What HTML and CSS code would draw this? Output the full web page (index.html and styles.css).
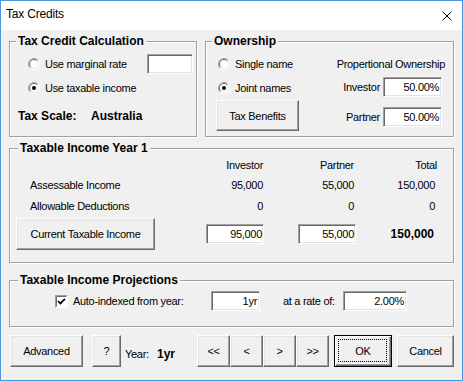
FILE: index.html
```html
<!DOCTYPE html>
<html>
<head>
<meta charset="utf-8">
<link rel="stylesheet" href="styles.css">
</head>
<body>
<div class="window">
  <div class="titlebar">
    <span class="title">Tax Credits</span>
    <svg class="close" viewBox="0 0 10 10" width="10" height="10"><path d="M0.5 0.5 L9.5 9.5 M9.5 0.5 L0.5 9.5" stroke="#000" stroke-width="1" fill="none"/></svg>
  </div>
  <div class="client">
    <div class="row1">
      <fieldset class="group g-calc">
        <legend>Tax Credit Calculation</legend>
        <div class="opt-row first">
          <svg class="radio" viewBox="0 0 12 12" width="12" height="12"><circle cx="6" cy="6" r="5.5" fill="#fff"/><path d="M2.1 9.9 A5.5 5.5 0 0 1 9.9 2.1" stroke="#a0a0a0" fill="none"/><path d="M9.9 2.1 A5.5 5.5 0 0 1 2.1 9.9" stroke="#fff" fill="none"/><path d="M2.8 9.2 A4.5 4.5 0 0 1 9.2 2.8" stroke="#696969" fill="none"/><path d="M9.2 2.8 A4.5 4.5 0 0 1 2.8 9.2" stroke="#e3e3e3" fill="none"/></svg>
          <span>Use marginal rate</span>
          <div class="field f-marg"></div>
        </div>
        <div class="opt-row">
          <svg class="radio" viewBox="0 0 12 12" width="12" height="12"><circle cx="6" cy="6" r="5.5" fill="#fff"/><path d="M2.1 9.9 A5.5 5.5 0 0 1 9.9 2.1" stroke="#a0a0a0" fill="none"/><path d="M9.9 2.1 A5.5 5.5 0 0 1 2.1 9.9" stroke="#fff" fill="none"/><path d="M2.8 9.2 A4.5 4.5 0 0 1 9.2 2.8" stroke="#696969" fill="none"/><path d="M9.2 2.8 A4.5 4.5 0 0 1 2.8 9.2" stroke="#e3e3e3" fill="none"/><circle cx="6" cy="6" r="2" fill="#000"/></svg>
          <span>Use taxable income</span>
        </div>
        <div class="scale-row">
          <b class="scale-lbl">Tax Scale:</b><b>Australia</b>
        </div>
      </fieldset>
      <fieldset class="group g-own">
        <legend>Ownership</legend>
        <div class="own-body">
          <div class="own-left">
            <div class="opt-row first">
              <svg class="radio" viewBox="0 0 12 12" width="12" height="12"><circle cx="6" cy="6" r="5.5" fill="#fff"/><path d="M2.1 9.9 A5.5 5.5 0 0 1 9.9 2.1" stroke="#a0a0a0" fill="none"/><path d="M9.9 2.1 A5.5 5.5 0 0 1 2.1 9.9" stroke="#fff" fill="none"/><path d="M2.8 9.2 A4.5 4.5 0 0 1 9.2 2.8" stroke="#696969" fill="none"/><path d="M9.2 2.8 A4.5 4.5 0 0 1 2.8 9.2" stroke="#e3e3e3" fill="none"/></svg>
              <span>Single name</span>
            </div>
            <div class="opt-row">
              <svg class="radio" viewBox="0 0 12 12" width="12" height="12"><circle cx="6" cy="6" r="5.5" fill="#fff"/><path d="M2.1 9.9 A5.5 5.5 0 0 1 9.9 2.1" stroke="#a0a0a0" fill="none"/><path d="M9.9 2.1 A5.5 5.5 0 0 1 2.1 9.9" stroke="#fff" fill="none"/><path d="M2.8 9.2 A4.5 4.5 0 0 1 9.2 2.8" stroke="#696969" fill="none"/><path d="M9.2 2.8 A4.5 4.5 0 0 1 2.8 9.2" stroke="#e3e3e3" fill="none"/><circle cx="6" cy="6" r="2" fill="#000"/></svg>
              <span>Joint names</span>
            </div>
            <button class="btn btn-taxben">Tax Benefits</button>
          </div>
          <div class="own-right">
            <div class="prop-row">Propertional Ownership</div>
            <div class="pct-row"><span>Investor</span><div class="field pct">50.00%</div></div>
            <div class="pct-row second"><span>Partner</span><div class="field pct">50.00%</div></div>
          </div>
        </div>
      </fieldset>
    </div>

    <fieldset class="group g-inc">
      <legend>Taxable Income Year 1</legend>
      <div class="inc-grid">
        <div></div><div class="num hdr c2">Investor</div><div></div><div class="num hdr c4">Partner</div><div class="num hdr c5">Total</div>
        <div class="lbl">Assessable Income</div><div class="num c2">95,000</div><div></div><div class="num c4">55,000</div><div class="num c5v">150,000</div>
        <div class="lbl">Allowable Deductions</div><div class="num c2">0</div><div></div><div class="num c4">0</div><div class="num c5v">0</div>
        <div class="btn-cell"><button class="btn btn-cti">Current Taxable Income</button></div><div class="field inc-in">95,000</div><div></div><div class="field inc-in">55,000</div><div class="num c5b">150,000</div>
      </div>
    </fieldset>

    <fieldset class="group g-proj">
      <legend>Taxable Income Projections</legend>
      <div class="proj-row">
        <svg class="chk" viewBox="0 0 13 13" width="13" height="13"><rect x="0.5" y="0.5" width="12" height="12" fill="#fff" stroke="#a0a0a0"/><path d="M1.5 11.5 V1.5 H11.5" stroke="#696969" fill="none"/><path d="M12.5 0.5 V12.5 H0.5" stroke="#fff" fill="none"/><path d="M3 6 L5.3 8.5 L10 3.8" stroke="#000" stroke-width="1.8" fill="none"/></svg>
        <span class="chk-lbl">Auto-indexed from year:</span>
        <div class="field f-year">1yr</div>
        <span class="rate-lbl">at a rate of:</span>
        <div class="field f-rate">2.00%</div>
      </div>
    </fieldset>

    <div class="bottom">
      <button class="btn b-adv">Advanced</button>
      <button class="btn b-help">?</button>
      <span class="year-lbl">Year:</span><b class="year-val">1yr</b>
      <div class="nav">
        <button class="btn b-nav">&lt;&lt;</button>
        <button class="btn b-nav">&lt;</button>
        <button class="btn b-nav">&gt;</button>
        <button class="btn b-nav">&gt;&gt;</button>
      </div>
      <button class="btn b-ok">OK</button>
      <button class="btn b-cancel">Cancel</button>
    </div>
  </div>
</div>
</body>
</html>
```
FILE: styles.css
```css
* { box-sizing: border-box; }
html, body { margin: 0; padding: 0; }
body {
  width: 463px;
  height: 381px;
  overflow: hidden;
  font-family: "Liberation Sans", Arial, sans-serif;
  font-size: 11px;
  letter-spacing: -0.3px;
  color: #000;
  background: #f0f0f0;
}
.window {
  width: 463px;
  height: 381px;
  border: 1px solid #4c97e0;
  display: flex;
  flex-direction: column;
  background: #f0f0f0;
}
.titlebar {
  height: 29px;
  flex: none;
  background: #fff;
  display: flex;
  align-items: center;
  padding-left: 5px;
}
.title {
  flex: 1;
  font-size: 12px;
  letter-spacing: -0.2px;
  padding-bottom: 4px;
}
.close { margin-right: 10px; }
.client {
  flex: 1;
  display: flex;
  flex-direction: column;
  padding: 4px 8px 0 8px;
}
.row1 { display: flex; gap: 8px; height: 103px; flex: none; }
.group {
  margin: 0;
  padding: 0 6px;
  min-width: 0;
  border: 1px solid #a0a0a0;
  box-shadow: inset 1px 1px 0 #fff, 1px 1px 0 #fff;
}
.group legend {
  padding: 0 2px;
  font-weight: bold;
  font-size: 12px;
  line-height: 14px;
  letter-spacing: 0;
  background: #f0f0f0;
}
.g-inc legend, .g-proj legend { margin-left: 2px; }
.g-calc { width: 188px; padding-right: 3px; }
.g-own { width: 249px; padding-right: 8px; }

.opt-row {
  display: flex;
  align-items: center;
  height: 20px;
  gap: 5px;
  margin-top: 4px;
  margin-left: 12px;
}
.opt-row.first { margin-top: 6px; }
.radio { flex: none; }
.f-marg { margin-left: auto; width: 46px; }
.scale-row {
  display: flex;
  align-items: center;
  height: 20px;
  margin-top: 8px;
  margin-left: 2px;
  font-size: 12px;
  letter-spacing: 0;
}
.scale-lbl { width: 73px; }

.field {
  background: #fff;
  height: 20px;
  border: 1px solid;
  border-color: #a0a0a0 #fff #fff #a0a0a0;
  box-shadow: inset 1px 1px 0 #696969, inset -1px -1px 0 #e3e3e3;
  display: flex;
  align-items: center;
  justify-content: flex-end;
  padding-right: 2px;
}

.own-body { display: flex; justify-content: space-between; }
.own-left { display: flex; flex-direction: column; align-items: flex-start; }
.own-left .opt-row { margin-left: 6px; }
.btn {
  font: inherit;
  letter-spacing: inherit;
  color: #000;
  background: #f0f0f0;
  margin: 0;
  padding: 0;
  border: 1px solid;
  border-color: #fff #696969 #696969 #fff;
  box-shadow: inset -1px -1px 0 #a0a0a0, inset 1px 1px 0 #e3e3e3;
  display: flex;
  align-items: center;
  justify-content: center;
}
.btn-taxben { margin-top: 2px; margin-left: 4px; width: 83px; height: 31px; }
.own-right { display: flex; flex-direction: column; align-items: flex-end; }
.prop-row { height: 20px; margin-top: 6px; display: flex; align-items: center; }
.pct-row {
  display: flex;
  align-items: center;
  gap: 3px;
  margin-top: 3px;
  margin-right: 3px;
}
.pct-row.second { margin-top: 10px; }
.pct { width: 59px; }

.g-inc { height: 122px; margin-top: 4px; flex: none; }
.inc-grid {
  display: grid;
  grid-template-columns: 190px 58px 34px 58px 81px;
  grid-template-rows: 20px 19px 24px 32px;
  align-items: center;
}
.num { text-align: right; }
.hdr.c2 { padding-right: 1px; }
.hdr.c4 { padding-right: 2px; }
.num.c2 { padding-right: 1px; }
.num.c4 { padding-right: 2px; }
.c5v { padding-right: 2px; }
.lbl { padding-left: 14px; }
.btn-cell { height: 32px; }
.btn-cti { width: 139px; height: 32px; }
.inc-in { padding-right: 1px; }
.c5b { font-weight: bold; font-size: 12px; letter-spacing: 0; padding-right: 3px; }

.g-proj { height: 54px; margin-top: 10px; flex: none; }
.proj-row { display: flex; align-items: center; height: 20px; margin-top: 4px; }
.chk { margin-left: 39px; flex: none; }
.chk-lbl { margin-left: 5px; width: 138px; }
.f-year { width: 49px; }
.rate-lbl { margin-left: 23px; width: 60px; }
.f-rate { width: 64px; }

.bottom { display: flex; align-items: center; height: 32px; margin-top: 8px; flex: none; }
.b-adv { width: 73px; height: 32px; margin-left: 1px; }
.b-help { width: 29px; height: 32px; margin-left: 9px; }
.year-lbl { margin-left: 4px; width: 32px; padding-top: 6px; }
.year-val { font-size: 12px; letter-spacing: 0; padding-top: 6px; }
.nav { display: flex; margin-left: 22px; }
.b-nav { width: 33px; height: 32px; }
.b-ok {
  position: relative;
  width: 58px;
  height: 32px;
  margin-left: 5px;
  border-color: #000;
  box-shadow: inset 1px 1px 0 #fff, inset -1px -1px 0 #696969, inset -2px -2px 0 #a0a0a0;
}
.b-ok::after {
  content: "";
  position: absolute;
  left: 3px; top: 3px; right: 4px; bottom: 4px;
  border: 1px dotted #000;
}
.b-cancel { width: 57px; height: 32px; margin-left: 5px; }
```
